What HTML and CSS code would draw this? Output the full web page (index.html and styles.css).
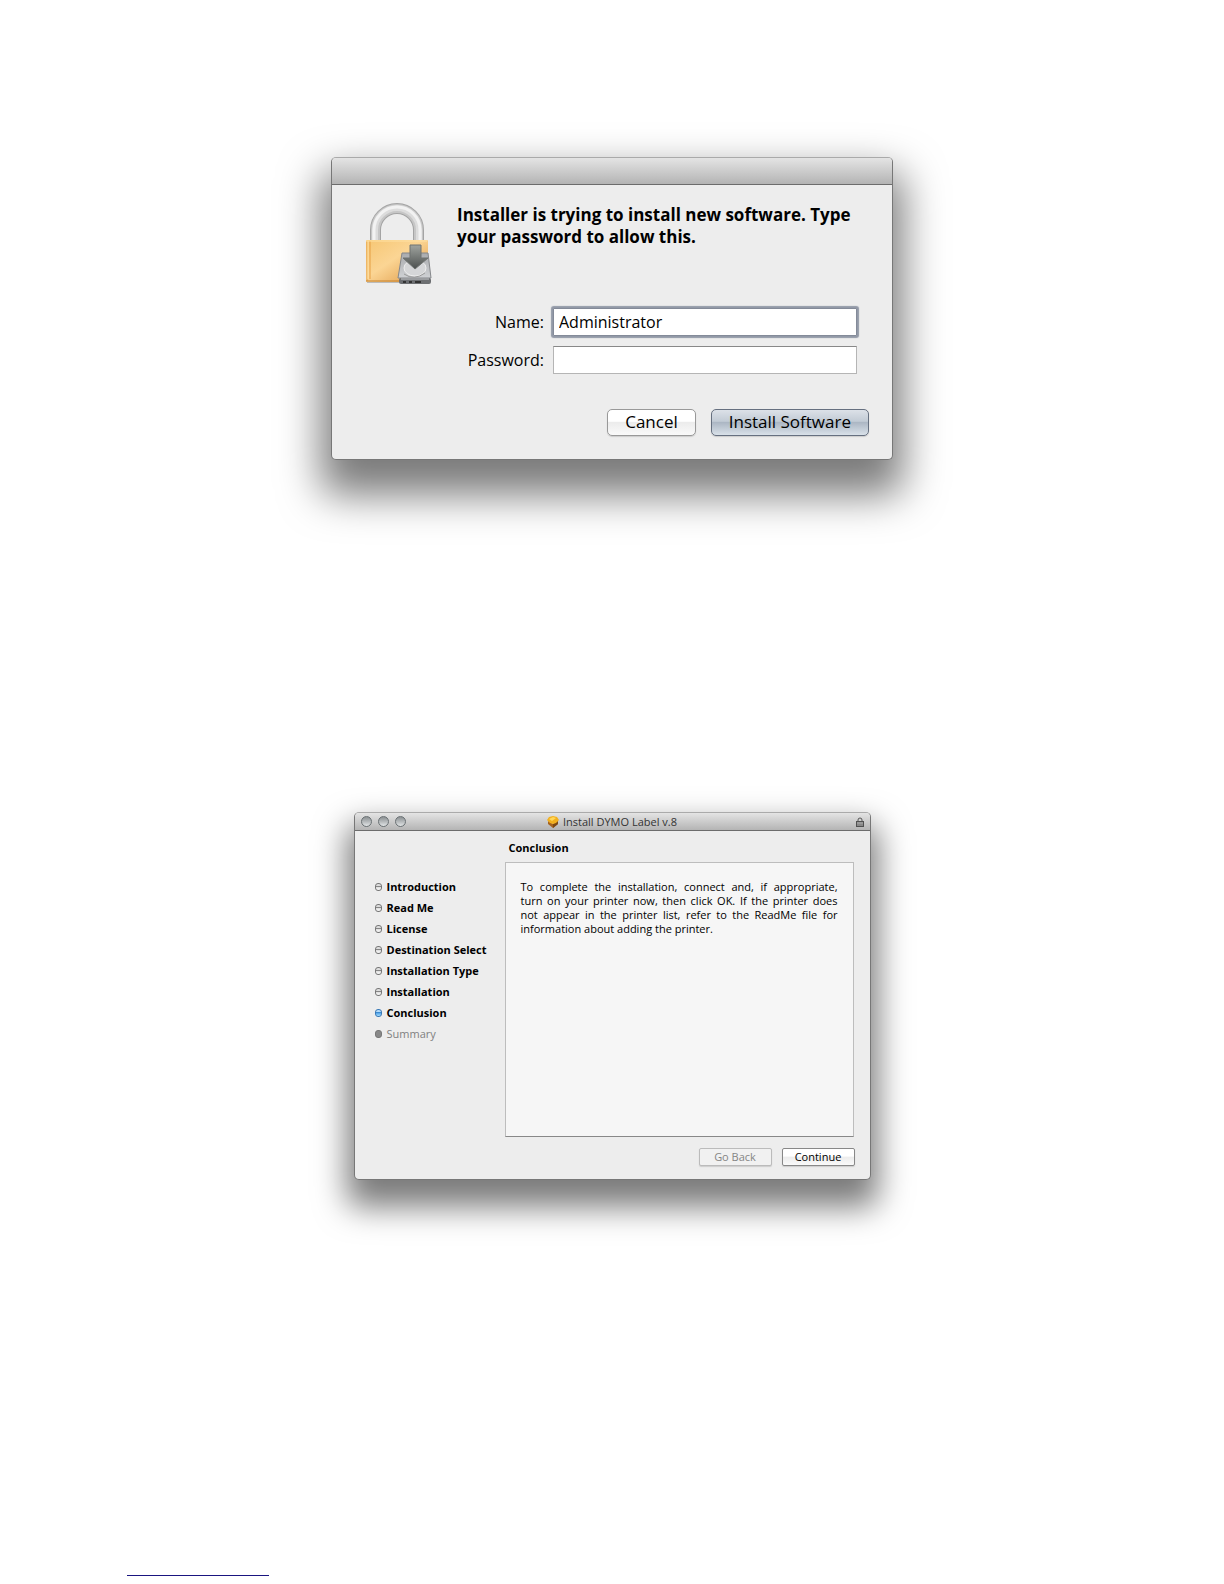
FILE: index.html
```html
<!DOCTYPE html>
<html lang="en">
<head>
<meta charset="utf-8">
<title>Install DYMO Label v.8</title>
<link rel="stylesheet" href="styles.css">
</head>
<body>
<main class="page">
  <section class="window auth" aria-labelledby="auth-message">
    <header class="titlebar auth-titlebar"></header>
    <form class="auth-body">
      <div class="auth-intro">
        <svg class="auth-icon" viewBox="0 0 68 82" aria-hidden="true">
          <defs>
            <linearGradient id="gold" x1="0" y1="0" x2="1" y2="1">
              <stop offset="0" stop-color="#f6c673"/><stop offset=".45" stop-color="#fbd594"/><stop offset="1" stop-color="#dd9540"/>
            </linearGradient>
            <linearGradient id="drive" x1="0" y1="0" x2="0" y2="1">
              <stop offset="0" stop-color="#a9abae"/><stop offset="1" stop-color="#cfd1d4"/>
            </linearGradient>
            <linearGradient id="arrow" x1="0" y1="0" x2="0" y2="1">
              <stop offset="0" stop-color="#a0a49f"/><stop offset="1" stop-color="#4c504f"/>
            </linearGradient>
          </defs>
          <path d="M10.500 38V27a21.500 21.500 0 0 1 43 0v11" fill="none" stroke="#a4a4a4" stroke-width="11"/>
          <path d="M10.500 38V27a21.500 21.500 0 0 1 43 0v11" fill="none" stroke="#c6c6c6" stroke-width="9"/>
          <path d="M10 38V27a22 22 0 0 1 44 0v11" fill="none" stroke="#dcdcdc" stroke-width="6"/>
          <path d="M9 38V27a23 23 0 0 1 46 0v11" fill="none" stroke="#f2f2f2" stroke-width="3"/>
          <rect x="2" y="78" width="52" height="2" fill="#999" opacity=".6"/>
          <rect x="1" y="37" width="62" height="42" rx="1" fill="url(#gold)"/>
          <path d="M2 38v40M5 38v38" stroke="#e59f45" stroke-width="1"/>
          <path d="M3 38v38M1 38h61" stroke="#ffe2a4" stroke-width="1"/>
          <path d="M1 78h60" stroke="#c4812f" stroke-width="1"/>
          <path d="M37 50h26l3 25H33z" fill="url(#drive)" stroke="#85878a"/>
          <ellipse cx="50" cy="65" rx="11" ry="8" fill="#d5d6d8" stroke="#eee"/>
          <path d="M39 71q10 7 21-1" fill="none" stroke="#999" stroke-width="1"/>
          <rect x="34" y="75" width="32" height="6" rx="2" fill="#6d6f72"/>
          <path d="M36 76h28" stroke="#c9cbcd"/>
          <path d="M38 79h3M44 79h3M50 79h6" stroke="#333" stroke-width="2"/>
          <path d="M45 42h11v13h7L50 66 38 55h7z" fill="url(#arrow)" stroke="#6f7371"/>
        </svg>
        <h1 class="auth-message" id="auth-message">Installer is trying to install new software. Type your password to allow this.</h1>
      </div>
      <div class="fields">
        <label for="name">Name:</label>
        <input class="field field-active" id="name" type="text" value="Administrator">
        <label for="password">Password:</label>
        <input class="field" id="password" type="password">
      </div>
      <div class="auth-actions">
        <button class="button" type="button">Cancel</button>
        <button class="button button-default" type="button">Install Software</button>
      </div>
    </form>
  </section>

  <section class="window installer" aria-labelledby="installer-title">
    <header class="titlebar installer-titlebar">
      <div class="lights">
        <button class="light" type="button" aria-label="Close"></button>
        <button class="light" type="button" aria-label="Minimize"></button>
        <button class="light" type="button" aria-label="Zoom"></button>
      </div>
      <h2 class="installer-title" id="installer-title">
        <svg class="package" viewBox="0 0 12 12" aria-hidden="true">
          <path d="M1 5l5 3 5-3v3l-5 4-5-4z" fill="#a5631f"/>
          <path d="M6 8l5-3v3l-5 4z" fill="#7c4915"/>
          <path d="M0 4l2-3 4-1 4 1 2 3-3 3-3 1-3-1z" fill="#f2b01e"/>
          <path d="M2 3l4-2 3 1-4 3z" fill="#ffd75c"/>
        </svg>
        Install DYMO Label v.8
      </h2>
      <svg class="padlock" viewBox="0 0 8 10" aria-hidden="true">
        <path d="M2 5V3a2 2 0 0 1 4 0v2" fill="none" stroke="#555" stroke-width="1"/>
        <rect x=".5" y="4.500" width="7" height="5" fill="#888" stroke="#505050"/>
        <path d="M1 6h6" stroke="#aaa"/>
      </svg>
    </header>
    <div class="installer-body">
      <ol class="steps">
        <li class="step">Introduction</li>
        <li class="step">Read Me</li>
        <li class="step">License</li>
        <li class="step">Destination Select</li>
        <li class="step">Installation Type</li>
        <li class="step">Installation</li>
        <li class="step step-current" aria-current="step">Conclusion</li>
        <li class="step step-pending">Summary</li>
      </ol>
      <div class="content">
        <h3 class="content-title">Conclusion</h3>
        <div class="panel">
          <p class="panel-text">
            <span class="line">To complete the installation, connect and, if appropriate,</span>
            <span class="line">turn on your printer now, then click OK. If the printer does</span>
            <span class="line">not appear in the printer list, refer to the ReadMe file for</span>
            <span class="line">information about adding the printer.</span>
          </p>
        </div>
        <div class="installer-actions">
          <button class="button button-small" type="button" disabled>Go Back</button>
          <button class="button button-small" type="button">Continue</button>
        </div>
      </div>
    </div>
  </section>
</main>
<footer class="footer">
  <a class="footer-link" href="#" aria-label="Contents"></a>
</footer>
</body>
</html>
```
FILE: styles.css
```css
*,
*::before {
  box-sizing: border-box;
}

body {
  margin: 0;
  min-height: 100vh;
  display: flex;
  flex-direction: column;
  background: #fff;
  color: #000;
  font-family: "Open Sans", "Noto Sans", sans-serif;
}

h1, h2, h3, p, ol {
  margin: 0;
  padding: 0;
}

.page {
  display: flex;
  flex-direction: column;
  align-items: center;
  gap: 352px;
  padding: 157px 16px 0;
}

.window {
  width: 100%;
  border: 1px solid #777;
  border-top-color: #aaa;
  border-radius: 5px;
  background: #ededed;
}

.auth {
  max-width: 562px;
  box-shadow: 0 25px 42px 10px rgba(0, 0, 0, .52);
}

.installer {
  max-width: 517px;
  box-shadow: 0 20px 32px 7px rgba(0, 0, 0, .52);
}

.titlebar {
  border-bottom: 1px solid #6c6c6c;
  border-radius: 4px 4px 0 0;
  background: linear-gradient(#e4e4e4, #b4b4b4);
}

.auth-titlebar {
  height: 27px;
}

.auth-body {
  padding: 18px 23px 23px 33px;
}

.auth-intro {
  display: flex;
  gap: 24px;
}

.auth-icon {
  flex: none;
  width: 68px;
  height: 82px;
}

.auth-message {
  padding: 1px 12px 0 0;
  font-size: 17px;
  line-height: 22px;
}

.fields {
  display: grid;
  grid-template-columns: 1fr minmax(0, 304px);
  gap: 10px 9px;
  align-items: center;
  padding: 23px 12px 0 0;
  font-size: 16px;
  line-height: 22px;
  text-align: right;
}

.field {
  width: 100%;
  height: 28px;
  margin: 0;
  padding: 0 5px;
  border: 1px solid #b5b5b5;
  border-top-color: #888;
  background: #fff;
  color: #000;
  font: inherit;
  text-align: left;
  outline: none;
}

.field-active {
  border: 1px solid #848b99;
  border-radius: 1px;
  box-shadow: 0 0 1px 2px #9299a7;
}

.auth-actions {
  display: flex;
  justify-content: flex-end;
  gap: 15px;
  padding-top: 35px;
}

.button {
  height: 27px;
  padding: 0 17px 2px;
  border: 1px solid #999;
  border-radius: 5px;
  background: linear-gradient(#fff, #fff 45%, #ececec 50%, #fafafa);
  box-shadow: 0 1px 1px #ccc;
  color: #000;
  font: 17px/22px "Open Sans", "Noto Sans", sans-serif;
}

.button-default {
  border-color: #667080;
  background: linear-gradient(#dce1e8, #c2cbd5 45%, #acb7c4 50%, #d9e1e9);
}

.installer-titlebar {
  display: grid;
  grid-template-columns: 1fr auto 1fr;
  align-items: center;
  height: 18px;
  padding: 0 6px;
}

.lights {
  display: flex;
  gap: 6px;
}

.light {
  width: 11px;
  height: 11px;
  padding: 0;
  border: 1px solid #697073;
  border-radius: 50%;
  background: linear-gradient(#8c9193, #b4b8ba 50%, #e2e5e6);
}

.installer-title {
  display: flex;
  align-items: center;
  gap: 4px;
  color: #333;
  font-size: 11px;
  font-weight: 400;
  line-height: 16px;
}

.package {
  width: 12px;
  height: 12px;
}

.padlock {
  justify-self: end;
  width: 8px;
  height: 10px;
}

.installer-body {
  display: flex;
  padding: 9px 15px 13px 20px;
}

.steps {
  flex: 0 0 130px;
  padding-top: 36px;
  list-style: none;
}

.step {
  display: flex;
  align-items: center;
  gap: 5px;
  font-size: 11px;
  font-weight: 700;
  line-height: 21px;
  white-space: nowrap;
}

.step::before {
  content: "";
  width: 7px;
  height: 8px;
  border: 1px solid #777;
  border-radius: 3px;
  background: linear-gradient(#ddd 35%, #777 35%, #999 50%, #eee 60%);
}

.step-current::before {
  border-color: #3978b5;
  background: linear-gradient(#b5dcfa 35%, #2e7dc8 35%, #62b0ee 60%, #a5dcff);
}

.step-pending {
  color: #808080;
  font-weight: 400;
}

.step-pending::before {
  border-color: #777;
  background: #888;
}

.content {
  flex: 1;
  min-width: 0;
}

.content-title {
  padding-left: 4px;
  font-size: 11px;
  line-height: 16px;
}

.panel {
  min-height: 275px;
  margin: 6px 1px 11px 0;
  padding: 17px 15px;
  border: 1px solid #bdbdbd;
  border-bottom-color: #888;
  background: #f6f6f6;
}

.panel-text {
  font-size: 11px;
  line-height: 14px;
}

.line {
  display: block;
  text-align: justify;
  text-align-last: justify;
}

.line:last-child {
  text-align-last: left;
}

.installer-actions {
  display: flex;
  justify-content: flex-end;
  gap: 10px;
}

.button-small {
  width: 73px;
  height: 18px;
  padding: 0;
  border-color: #888;
  border-radius: 2px;
  font-size: 11px;
  line-height: 16px;
}

.button-small:disabled {
  border-color: #bbb;
  background: #f1f1f1;
  color: #858585;
}

.footer {
  margin-top: auto;
  padding: 0 127px 8px;
}

.footer-link {
  display: block;
  width: 142px;
  height: 14px;
  border-bottom: 1px solid #1a1580;
}
```
